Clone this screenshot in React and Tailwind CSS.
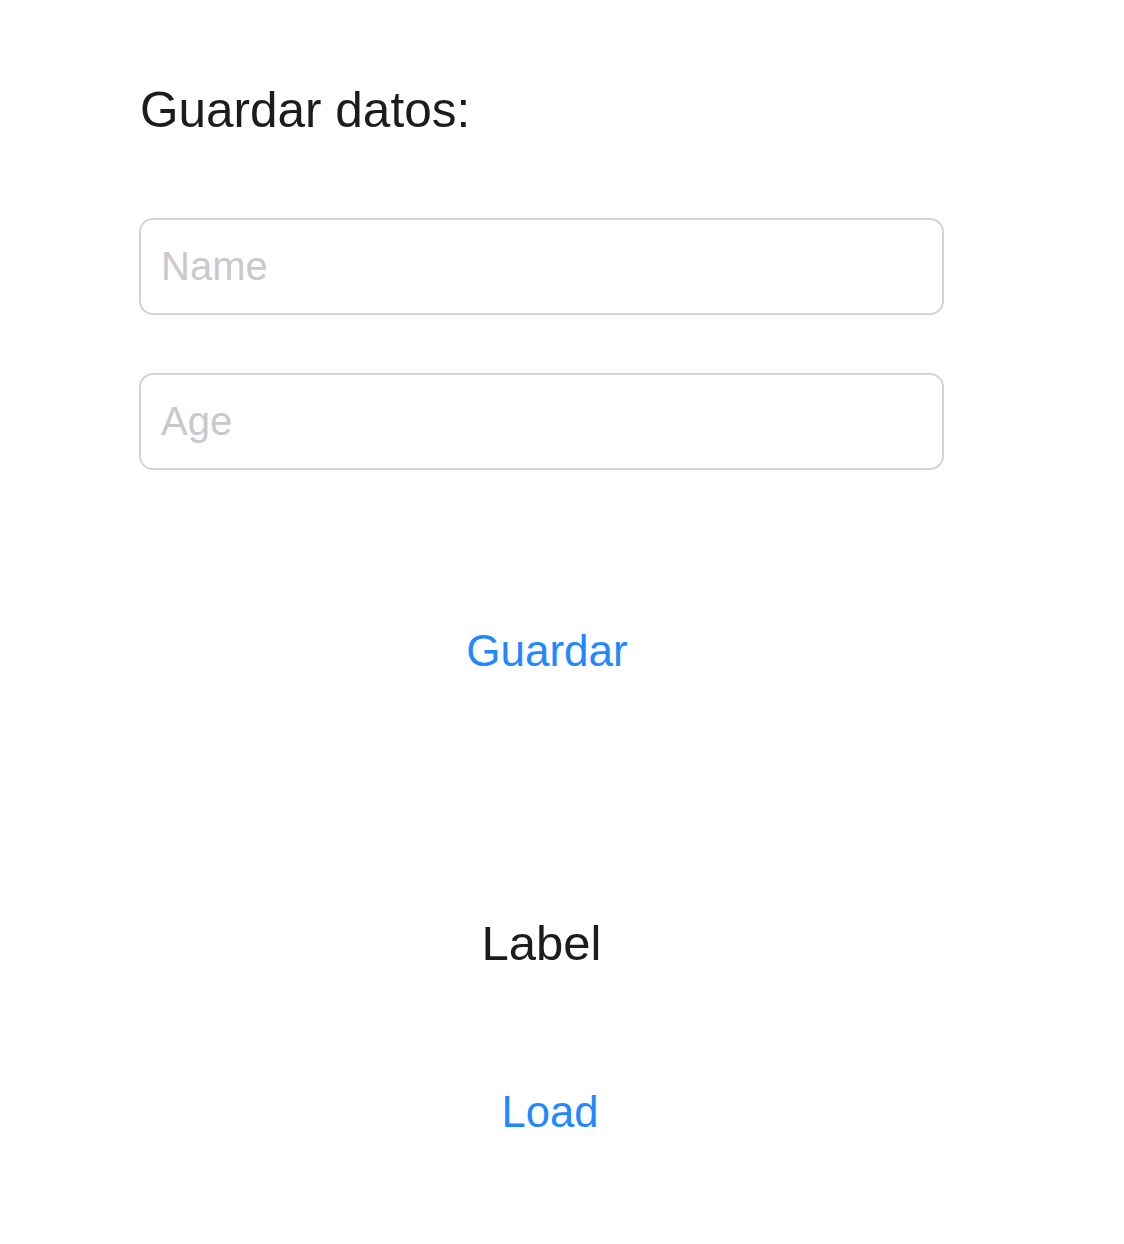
export default function App() {
  const font = { fontFamily: '"Liberation Sans", Arial, sans-serif' };

  return (
    <div className="min-h-[1244px] w-[1124px] bg-white" style={font}>
      <div className="flex w-[805px] flex-col ml-[139px]">
        <h1 className="mt-[85px] pl-[1px] text-[49.5px] leading-none font-normal text-[#1c1c1c]">
          Guardar datos:
        </h1>

        <input
          type="text"
          placeholder="Name"
          className="mt-[83px] h-[97px] w-full rounded-[14px] border-2 border-[#d4d4d4] px-[20px] text-[40px] text-[#1c1c1c] outline-none placeholder:text-[#c9c9cd]"
        />
        <input
          type="text"
          placeholder="Age"
          className="mt-[58px] h-[97px] w-full rounded-[14px] border-2 border-[#d4d4d4] px-[20px] text-[40px] text-[#1c1c1c] outline-none placeholder:text-[#c9c9cd]"
        />

        <button className="mt-[159px] self-center pl-[11px] text-[44px] leading-none text-[#2188ff]">
          Guardar
        </button>

        <p className="mt-[246px] self-center text-[49px] leading-none text-[#1c1c1c]">Label</p>

        <button className="mt-[123px] self-center pl-[17px] text-[43.5px] leading-none text-[#2188ff]">
          Load
        </button>
      </div>
    </div>
  );
}
